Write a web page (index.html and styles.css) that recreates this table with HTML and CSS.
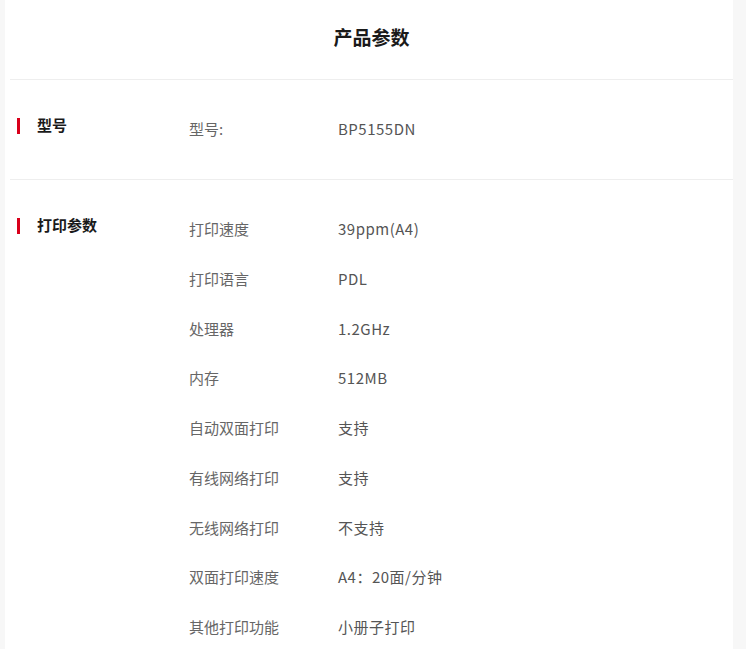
FILE: index.html
```html
<!DOCTYPE html>
<html lang="zh-CN">
<head>
<meta charset="utf-8">
<title>产品参数</title>
<link rel="stylesheet" href="styles.css">
</head>
<body>
<div class="panel">
  <h1 class="title">产品参数</h1>
  <section class="group">
    <div class="group-label">型号</div>
    <div class="rows">
      <div class="row"><span class="key">型号:</span><span class="val">BP5155DN</span></div>
    </div>
  </section>
  <section class="group">
    <div class="group-label">打印参数</div>
    <div class="rows">
      <div class="row"><span class="key">打印速度</span><span class="val">39ppm(A4)</span></div>
      <div class="row"><span class="key">打印语言</span><span class="val">PDL</span></div>
      <div class="row"><span class="key">处理器</span><span class="val">1.2GHz</span></div>
      <div class="row"><span class="key">内存</span><span class="val">512MB</span></div>
      <div class="row"><span class="key">自动双面打印</span><span class="val">支持</span></div>
      <div class="row"><span class="key">有线网络打印</span><span class="val">支持</span></div>
      <div class="row"><span class="key">无线网络打印</span><span class="val">不支持</span></div>
      <div class="row"><span class="key">双面打印速度</span><span class="val">A4：20面/分钟</span></div>
      <div class="row"><span class="key">其他打印功能</span><span class="val">小册子打印</span></div>
    </div>
  </section>
</div>
</body>
</html>
```
FILE: styles.css
```css
html, body {
  margin: 0;
  padding: 0;
  background: #f7f7f7;
  font-family: "Noto Sans CJK SC", "Noto Sans", sans-serif;
}
.panel {
  margin-left: 5px;
  width: 728px;
  background: #fff;
  min-height: 649px;
  padding-left: 5px;
  box-sizing: border-box;
}
.title {
  margin: 0;
  height: 79px;
  line-height: 74px;
  text-align: center;
  font-size: 19px;
  font-weight: 700;
  color: #1a1a1a;
  border-bottom: 1px solid #eeeeee;
}
.group {
  display: flex;
  padding: 24px 0 25px 5px;
  border-bottom: 1px solid #eeeeee;
}
.group-label {
  position: relative;
  width: 152px;
  padding-left: 22px;
  padding-top: 10px;
  line-height: 22px;
  height: 22px;
  font-size: 15px;
  font-weight: 700;
  color: #1a1a1a;
}
.group-label::before {
  content: "";
  position: absolute;
  left: 2px;
  top: 14px;
  width: 3px;
  height: 16px;
  background: #d9001b;
}
.rows {
  display: flex;
  flex-direction: column;
}
.row {
  display: flex;
  height: 49.75px;
  align-items: center;
  font-size: 15px;
  color: #666;
}
.key {
  width: 149px;
}
.val {
  color: #555;
  letter-spacing: 0.5px;
}
```
